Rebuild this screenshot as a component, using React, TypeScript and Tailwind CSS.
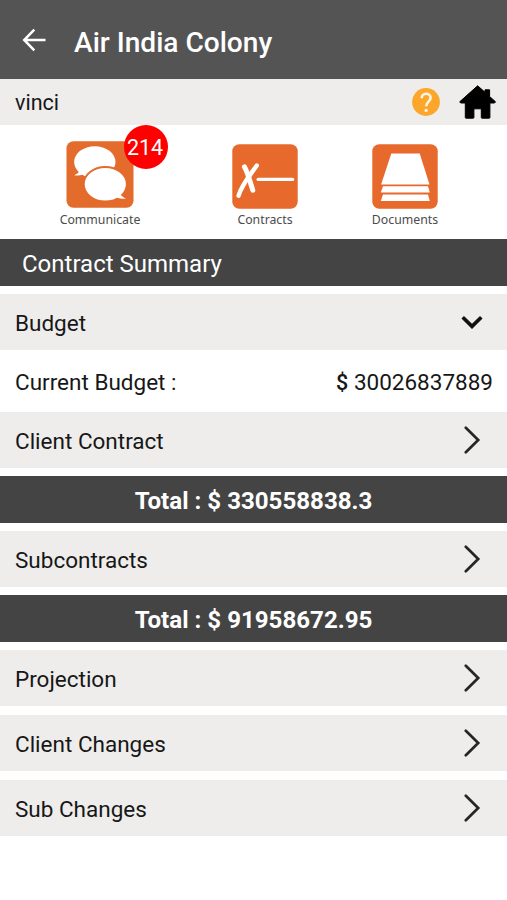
import type { ReactNode } from 'react';

interface ShortcutProps {
  label: string;
  className: string;
  children: ReactNode;
}

function BackArrow() {
  return (
    <svg width="24" height="24" viewBox="0 0 24 24" fill="none" stroke="#ffffff" strokeWidth="2.5">
      <path d="M23.5 12H2.5M12.3 1.7 2.2 12l10.1 10.3" />
    </svg>
  );
}

function HelpIcon() {
  return (
    <svg width="28" height="28" viewBox="0 0 28 28" fill="none">
      <circle cx="14" cy="14" r="13.9" fill="#fca62b" />
      <path
        d="M9.7 10.2c0-2.7 1.9-4.4 4.4-4.4s4.5 1.7 4.5 4.2c0 3.6-4.4 3.8-4.4 8.2"
        stroke="#fff5e4"
        strokeWidth="2.6"
      />
      <circle cx="14.1" cy="22.4" r="1.6" fill="#fff5e4" />
    </svg>
  );
}

function HomeIcon() {
  return (
    <svg width="38" height="34" viewBox="0 0 38 34" fill="#000000" stroke="#000000" strokeLinejoin="round">
      <path d="M18.6.8.7 16.8l1 1.2h4.6v14.5q0 .7.7.7h7.2q.7 0 .7-.7v-8.7h7.4v8.7q0 .7.7.7h7.2q.7 0 .7-.7V18h4.6l1-1.2-5.9-5.3V4.8h-4.6v2.4Z" />
    </svg>
  );
}

function CommunicateIcon() {
  return (
    <svg width="68" height="67" viewBox="0 0 68 67">
      <rect x=".5" y=".3" width="67" height="66.4" rx="7" fill="#e36b2c" />
      <g fill="#ffffff">
        <ellipse cx="28.8" cy="21" rx="20.7" ry="15.8" />
        <path d="M14 29c-1 2.4-3.2 4.3-5.8 5.2 4.5.7 9.3 0 13-2.2Z" />
      </g>
      <ellipse cx="39.3" cy="43.2" rx="21.5" ry="17.2" fill="#ffffff" stroke="#e36b2c" strokeWidth="1.8" />
      <path d="M54 52.5c1.2 2.5 3.5 4.2 6 4.9-4.3.8-9-.2-12.3-2.6Z" fill="#ffffff" />
    </svg>
  );
}

function ContractsIcon() {
  return (
    <svg width="66" height="65" viewBox="0 0 66 65" fill="none" strokeLinecap="round" strokeLinejoin="round">
      <rect x=".3" y=".3" width="65.4" height="64.4" rx="7" fill="#e7692b" />
      <path d="M12.4 22.8c3.8 6.5 5.4 14.5 8.4 23.4" stroke="#ffffff" strokeWidth="5" />
      <path d="M24.8 21.5C18.5 30.5 9.5 41 6.6 51.7" stroke="#ffffff" strokeWidth="4.4" />
      <path d="M26.2 35.4H60.6" stroke="#ffffff" strokeWidth="3.4" />
    </svg>
  );
}

function DocumentsIcon() {
  return (
    <svg width="66" height="65" viewBox="0 0 66 65" fill="#ffffff">
      <rect x=".3" y=".3" width="65.4" height="64.4" rx="7" fill="#e7692b" />
      <path d="M19.3 9.5h28.4l9.8 30.9H9.1Z" />
      <path d="M11 42.3h45l1.8 6.3H8.8Z" />
      <path d="M11 50.4h45l1.8 6.5H8.8Z" />
    </svg>
  );
}

function Shortcut({ label, className, children }: ShortcutProps) {
  return (
    <button
      type="button"
      className={`flex flex-col items-center font-['Noto_Sans',sans-serif] leading-[18px] text-[#4b4b4b] ${className}`}
    >
      {children}
      <span>{label}</span>
    </button>
  );
}

function ChevronDown() {
  return (
    <svg width="22" height="16" viewBox="0 0 22 16" fill="none" stroke="#111111" strokeWidth="3.6">
      <path d="m1.7 3.2 9.3 9.2 9.3-9.2" />
    </svg>
  );
}

function ChevronRight() {
  return (
    <svg width="18" height="28" viewBox="0 0 18 28" fill="none" stroke="#262626" strokeWidth="2.7" strokeLinecap="round">
      <path d="M2.8 1.8 15.2 14 2.8 26.2" />
    </svg>
  );
}

function Row({ label, open = false }: { label: string; open?: boolean }) {
  return (
    <button type="button" className="flex h-14 w-full items-center justify-between bg-[#eeedeb] pl-[15px] text-[#171717]">
      <span className="mt-px">{label}</span>
      {open ? (
        <span className="mr-[24px]"><ChevronDown /></span>
      ) : (
        <span className="mr-[26px]"><ChevronRight /></span>
      )}
    </button>
  );
}

function Total({ amount }: { amount: string }) {
  return (
    <div className="my-2 flex h-[47px] items-center justify-center bg-[#444444] pt-[3px] text-[24.1px] font-bold text-white">
      Total : $ {amount}
    </div>
  );
}

export default function App() {
  return (
    <div className="min-h-[900px] w-[507px] bg-white font-[Roboto,sans-serif] text-[22.5px] leading-7 text-[#171717]">
      <header className="flex h-[79px] items-center gap-[28px] bg-[#545454] pl-[22px] text-white">
        <BackArrow />
        <h1 className="mt-[6px] text-[28.1px] font-medium">Air India Colony</h1>
      </header>

      <div className="flex h-[46px] items-center bg-[#eeedeb] pr-[10px] pl-[15px]">
        <span className="mt-px text-[21.5px]">vinci</span>
        <div className="ml-auto flex items-center gap-[19px]">
          <HelpIcon />
          <HomeIcon />
        </div>
      </div>

      <nav className="flex h-[114px] items-start">
        <div className="relative ml-[60px] w-[80px]">
          <Shortcut label="Communicate" className="w-full gap-[3px] pt-4 text-[12.3px]">
            <CommunicateIcon />
          </Shortcut>
          <span className="absolute top-0 left-[64px] flex size-[44px] items-center justify-center rounded-full bg-[#ff0000] pt-px pr-0.5 text-[21.5px] text-white">
            214
          </span>
        </div>
        <Shortcut label="Contracts" className="ml-[92px] w-[66px] gap-0.5 pt-[19px] text-[12.3px]">
          <ContractsIcon />
        </Shortcut>
        <Shortcut label="Documents" className="ml-[74px] w-[66px] gap-0.5 pt-[19px] text-[12.3px]">
          <DocumentsIcon />
        </Shortcut>
      </nav>

      <main>
        <h2 className="mb-2 flex h-[47px] items-center bg-[#444444] pt-[3px] pl-[22px] text-[24px] text-white">
          Contract Summary
        </h2>
        <Row label="Budget" open />
        <div className="flex h-[62px] items-center justify-between pt-px pr-[14px] pl-[15px]">
          <span>Current Budget :</span>
          <span className="pt-px">
            <span className="text-[21.5px] font-medium">$</span> 30026837889
          </span>
        </div>
        <Row label="Client Contract" />
        <Total amount="330558838.3" />
        <Row label="Subcontracts" />
        <Total amount="91958672.95" />
        <div className="flex flex-col gap-[9px]">
          <Row label="Projection" />
          <Row label="Client Changes" />
          <Row label="Sub Changes" />
        </div>
      </main>
    </div>
  );
}
